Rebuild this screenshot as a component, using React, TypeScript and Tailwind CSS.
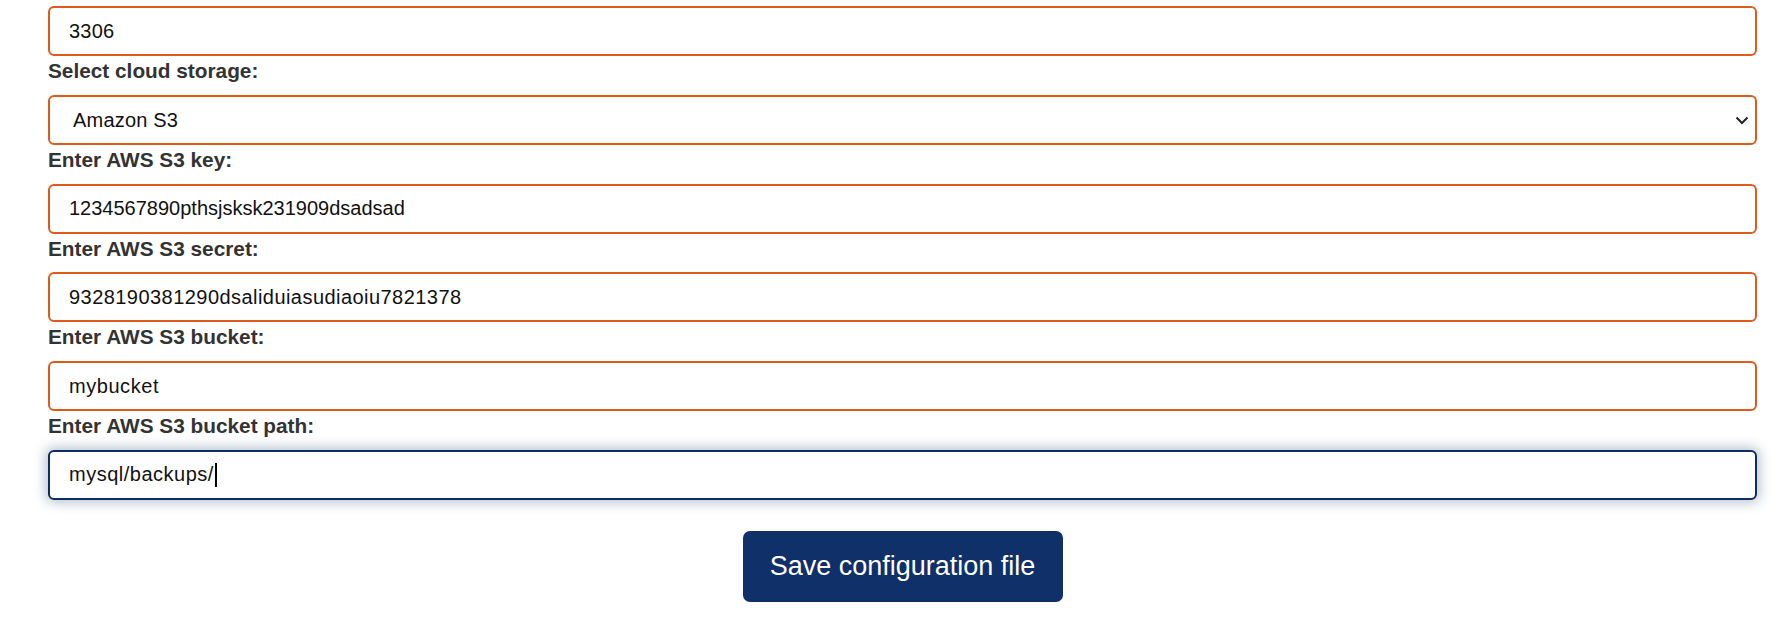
import React from 'react';

const font = { fontFamily: '"Liberation Sans", Arial, sans-serif' };

const Label = ({ children }: { children: React.ReactNode }) => (
  <label className="block h-[38.75px] pt-[3px] text-[20.8px] font-bold leading-[24px] text-[#333333]">
    {children}
  </label>
);

const Field = ({
  value,
  spacing = '',
  focused = false,
}: {
  value: string;
  spacing?: string;
  focused?: boolean;
}) => (
  <div className="relative">
    <input
      type="text"
      defaultValue={value}
      className={
        (focused
          ? 'border-[#0d2d62] shadow-[0_0_12px_3px_rgba(13,45,98,0.28)] '
          : 'border-[#df5a1d] ') +
        'block h-[50px] w-full rounded-[6px] border-2 bg-white pl-[19px] text-[20px] text-[#111111] outline-none ' +
        spacing
      }
    />
    {/* text caret for the focused field */}
    {focused && (
      <div
        className={'pointer-events-none absolute inset-y-0 left-[21px] flex items-center text-[20px] ' + spacing}
      >
        <span className="invisible">{value}</span>
        <span className="ml-[1px] inline-block h-[24px] w-[2px] bg-black" />
      </div>
    )}
  </div>
);

export default function App() {
  return (
    <div className="min-h-[625px] bg-white pt-[6px] pl-[48px] pr-[31px]" style={font}>
      <form onSubmit={(e) => e.preventDefault()}>
        <Field value="3306" spacing="tracking-[0.2px]" />
        <Label>Select cloud storage:</Label>

        {/* select with a drawn chevron in place of the native arrow */}
        <div className="relative">
          <select
            defaultValue="s3"
            className="block h-[50px] w-full appearance-none rounded-[6px] border-2 border-[#df5a1d] bg-white pl-[23px] text-[20px] tracking-[0.2px] text-[#111111] outline-none"
          >
            <option value="s3">Amazon S3</option>
            <option value="gcs">Google Cloud Storage</option>
          </select>
          <svg
            className="pointer-events-none absolute right-[8px] top-[19px] h-[12px] w-[14px]"
            viewBox="0 0 14 12"
            fill="none"
            stroke="#222222"
            strokeWidth="2"
          >
            <path d="M1.5 3.5 L7 9 L12.5 3.5" />
          </svg>
        </div>
        <Label>Enter AWS S3 key:</Label>

        <Field value="1234567890pthsjsksk231909dsadsad" />
        <Label>Enter AWS S3 secret:</Label>

        <Field value="9328190381290dsaliduiasudiaoiu7821378" spacing="tracking-[0.45px]" />
        <Label>Enter AWS S3 bucket:</Label>

        <Field value="mybucket" spacing="tracking-[0.55px]" />
        <Label>Enter AWS S3 bucket path:</Label>

        <Field value="mysql/backups/" spacing="tracking-[0.5px]" focused />

        <div className="flex justify-center pt-[31px]">
          <button
            type="submit"
            className="h-[71px] w-[320px] rounded-[7px] bg-[#0f3068] text-[27px] text-white"
          >
            Save configuration file
          </button>
        </div>
      </form>
    </div>
  );
}
